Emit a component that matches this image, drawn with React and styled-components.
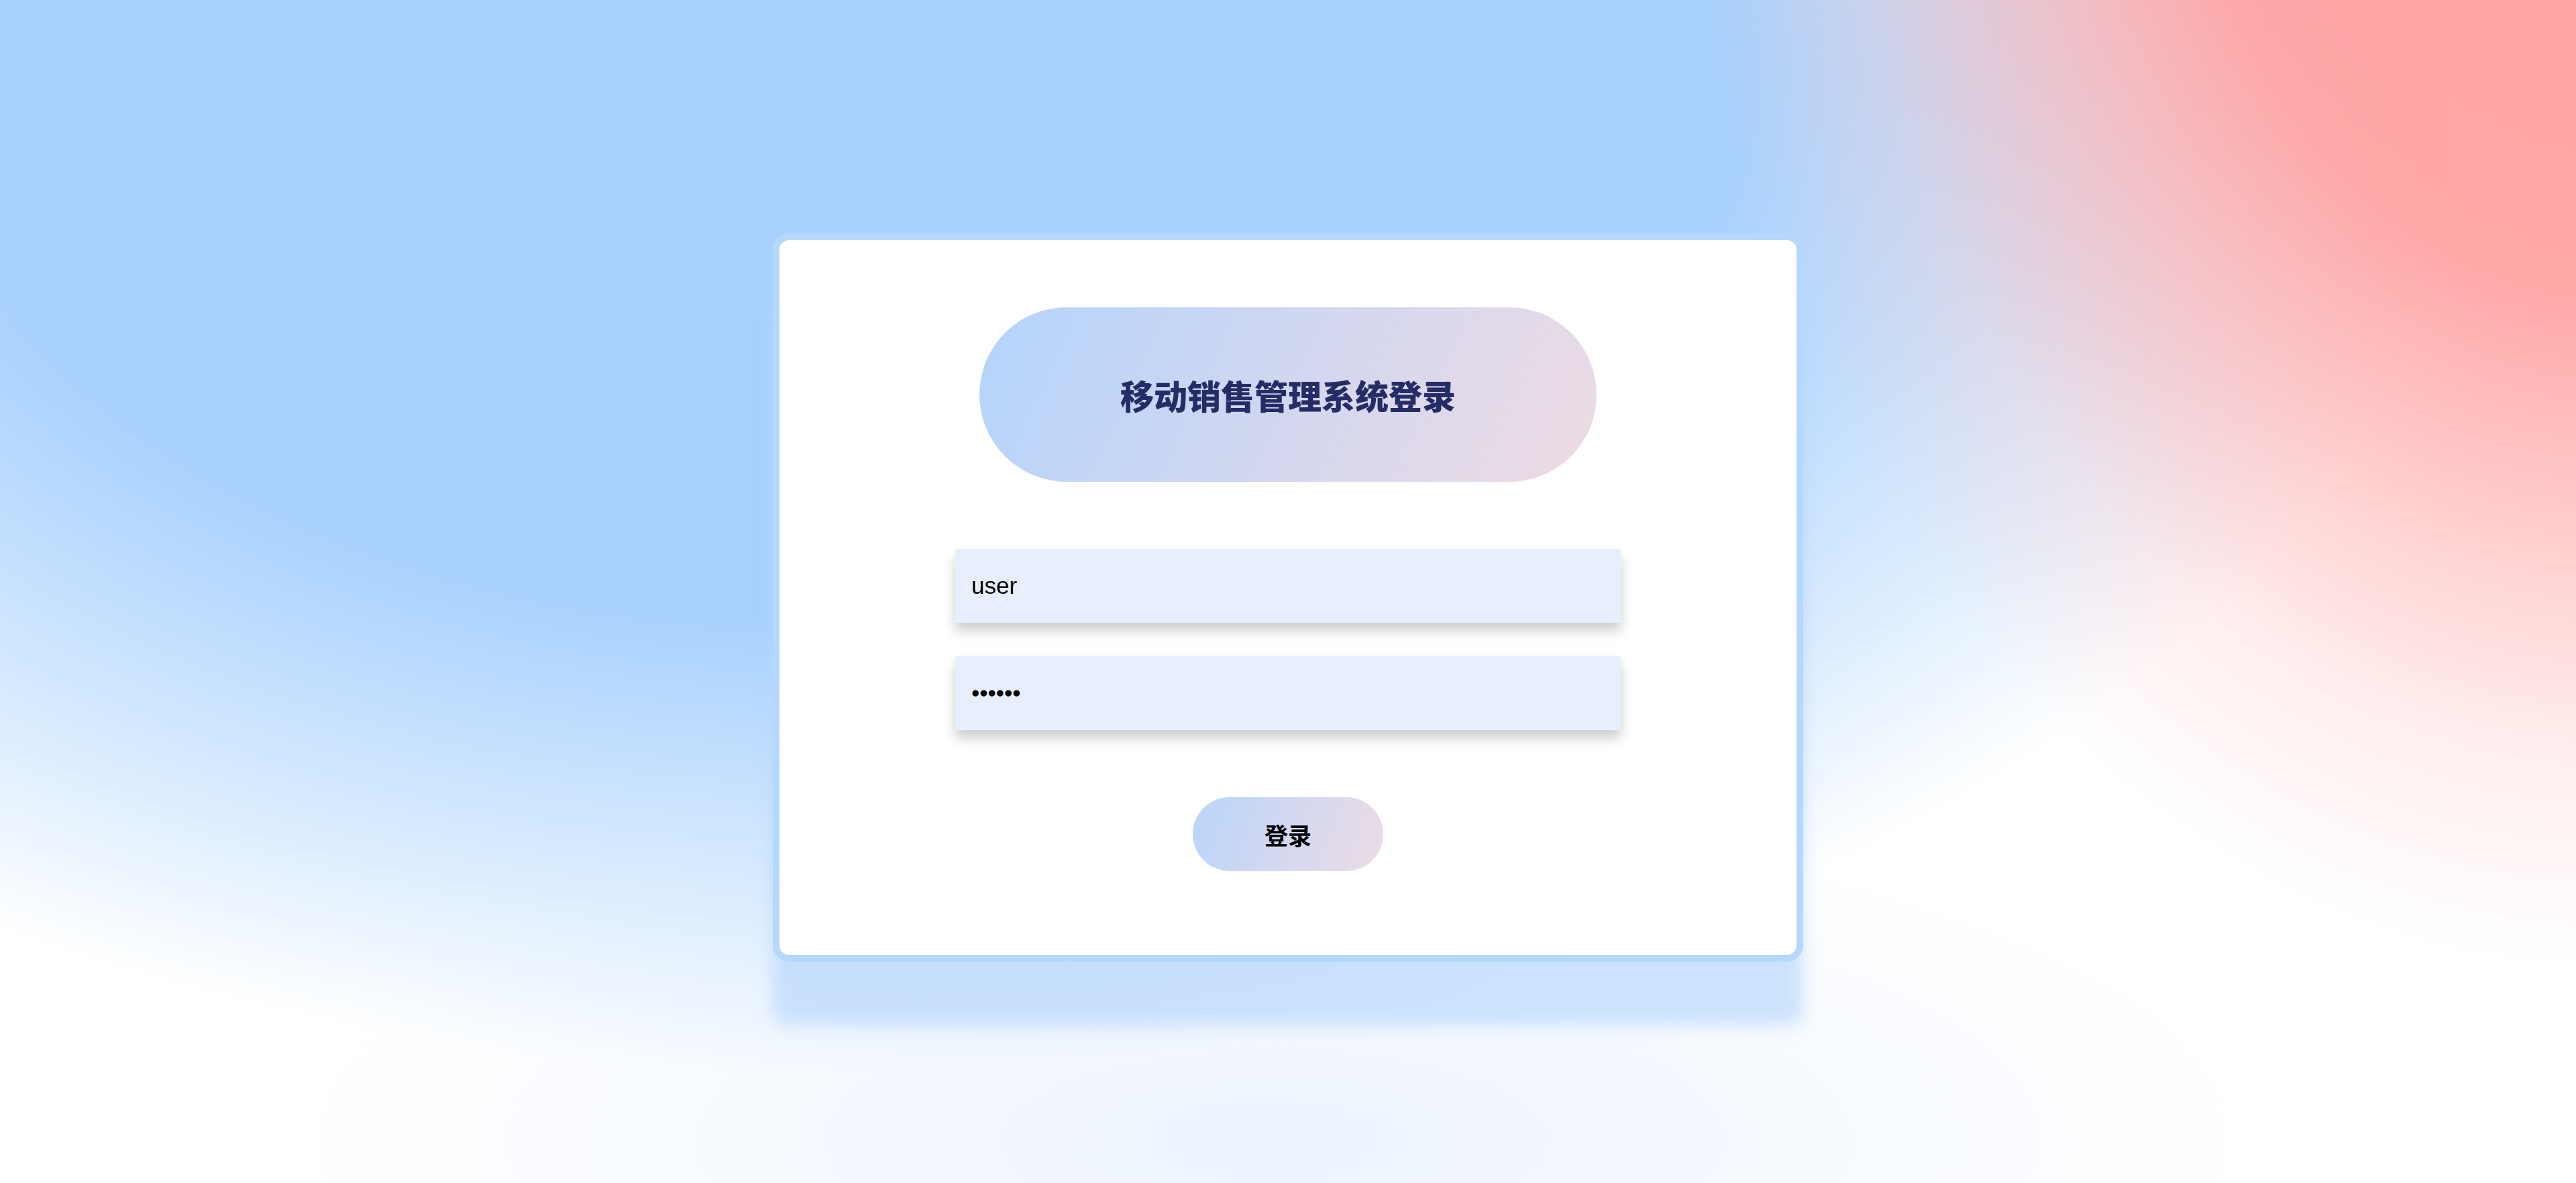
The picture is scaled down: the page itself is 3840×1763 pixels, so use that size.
import React, { useState } from 'react'
import styled, { createGlobalStyle } from 'styled-components'

const GlobalStyle = createGlobalStyle`
  html, body {
    margin: 0;
    padding: 0;
  }
  body {
    font-family: "Liberation Sans", "Noto Sans CJK SC", sans-serif;
  }
  * {
    box-sizing: border-box;
  }
`

const Page = styled.div`
  min-height: 100vh;
  display: flex;
  justify-content: center;
  align-items: flex-start;
  padding-top: 348px;
  background:
    radial-gradient(ellipse 1400px 1850px at 3900px -400px,
      rgba(255, 160, 160, 1) 0%,
      rgba(255, 163, 163, 0.95) 45%,
      rgba(255, 175, 175, 0.62) 65%,
      rgba(255, 190, 190, 0.25) 83%,
      rgba(255, 210, 210, 0) 100%),
    radial-gradient(ellipse 2450px 1500px at 1250px 100px,
      #a8d1fd 0%,
      #a8d1fd 55%,
      rgba(168, 209, 253, 0.5) 78%,
      rgba(168, 209, 253, 0) 100%),
    radial-gradient(ellipse 1500px 500px at 1900px 1700px,
      rgba(225, 236, 253, 0.6) 0%,
      rgba(225, 236, 253, 0) 100%),
    #ffffff;
`

const Card = styled.div`
  width: 1536px;
  height: 1085px;
  border: 10px solid #b5d8fc;
  border-radius: 24px;
  background: #fff;
  box-shadow: 0 95px 24px rgba(181, 214, 252, 0.65);
  display: flex;
  flex-direction: column;
  align-items: center;
  padding-top: 100px;
`

const TitleBar = styled.div`
  width: 920px;
  height: 260px;
  border-radius: 130px;
  background: linear-gradient(115deg, #b3d4fc 0%, #d2d7f0 50%, #eedbe3 100%);
  display: flex;
  align-items: center;
  justify-content: center;
`

const Title = styled.h1`
  margin: 0;
  font-family: "Noto Sans CJK SC", sans-serif;
  font-weight: 900;
  font-size: 50px;
  color: #262d66;
`

const Form = styled.form`
  margin-top: 100px;
  display: flex;
  flex-direction: column;
  align-items: center;
  gap: 50px;
`

const Field = styled.input`
  width: 992px;
  height: 110px;
  border: none;
  outline: none;
  background: #e8effc;
  padding: 0 24px;
  font-family: "Liberation Sans", sans-serif;
  font-size: 35px;
  color: #000;
  box-shadow: 0 12px 18px rgba(0, 0, 0, 0.2);
`

const LoginButton = styled.button`
  margin-top: 50px;
  width: 284px;
  height: 110px;
  border: none;
  border-radius: 55px;
  background: linear-gradient(110deg, #b9d5fa 0%, #d4d8f0 50%, #ecdbe5 100%);
  font-family: "Noto Sans CJK SC", sans-serif;
  font-weight: 700;
  font-size: 35px;
  color: #000;
  cursor: pointer;
`

export default function App() {
  const [user, setUser] = useState('user')
  const [pwd, setPwd] = useState('123456')

  return (
    <>
      <GlobalStyle />
      <Page>
        <Card>
          <TitleBar>
            <Title>移动销售管理系统登录</Title>
          </TitleBar>
          <Form onSubmit={(e) => e.preventDefault()}>
            <Field value={user} onChange={(e) => setUser(e.target.value)} />
            <Field type="password" value={pwd} onChange={(e) => setPwd(e.target.value)} />
            <LoginButton type="submit">登录</LoginButton>
          </Form>
        </Card>
      </Page>
    </>
  )
}
